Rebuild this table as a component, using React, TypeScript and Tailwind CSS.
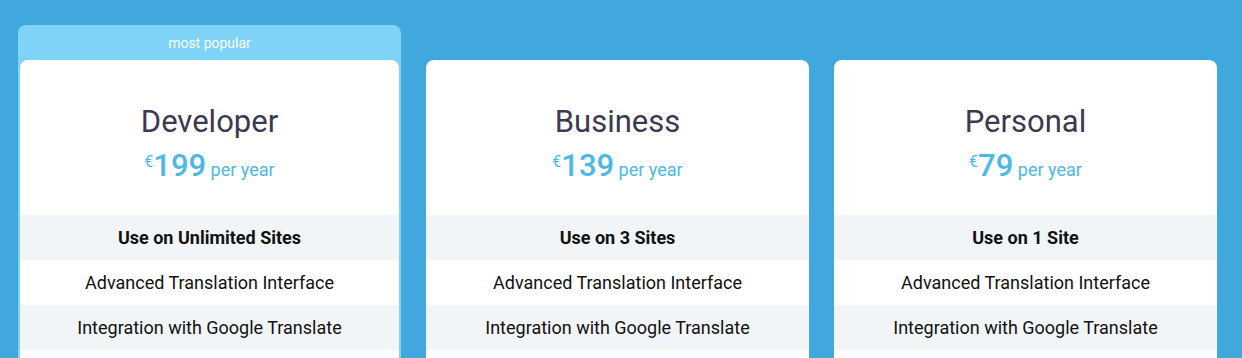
const plans = [
  { name: "Developer", price: "199", sites: "Use on Unlimited Sites", popular: true },
  { name: "Business", price: "139", sites: "Use on 3 Sites", popular: false },
  { name: "Personal", price: "79", sites: "Use on 1 Site", popular: false },
];

const features = [
  "Advanced Translation Interface",
  "Integration with Google Translate",
  "Translation Memory",
];

function PlanCard({ name, price, sites }: { name: string; price: string; sites: string }) {
  return (
    <div className="overflow-hidden rounded-lg bg-white">
      <div className="flex h-[155px] flex-col items-center pt-[43px]">
        <h2 className="text-[31px] leading-[38px] font-normal text-[#3b3953]">{name}</h2>
        <p className="mt-[3px] text-[31px] leading-[36px] text-[#4cb8e8]">
          <span className="align-[9px] text-[16px]">€</span>
          <span className="font-medium">{price}</span>
          <span className="text-[18px]"> per year</span>
        </p>
      </div>
      <div className="flex h-[45px] items-center justify-center bg-[#f2f5f8] text-[18px] font-bold text-[#111]">
        {sites}
      </div>
      {features.map((f, i) => (
        <div
          key={f}
          className={
            "flex h-[45px] items-center justify-center text-[18px] text-[#111] " +
            (i % 2 === 1 ? "bg-[#f2f5f8]" : "bg-white")
          }
        >
          {f}
        </div>
      ))}
    </div>
  );
}

export default function App() {
  return (
    <div className="h-screen overflow-hidden bg-[#41a8de] font-['Roboto',sans-serif]">
      <div className="flex gap-[25px] pl-[18px] pt-[25px]">
        {plans.map((p) =>
          p.popular ? (
            <div key={p.name} className="w-[383px] rounded-lg bg-[#7ed3f7] px-[2px]">
              <div className="flex h-[35px] items-center justify-center pt-[1px] text-[14px] text-white">
                most popular
              </div>
              <PlanCard name={p.name} price={p.price} sites={p.sites} />
            </div>
          ) : (
            <div key={p.name} className="mt-[35px] w-[383px]">
              <PlanCard name={p.name} price={p.price} sites={p.sites} />
            </div>
          )
        )}
      </div>
    </div>
  );
}
